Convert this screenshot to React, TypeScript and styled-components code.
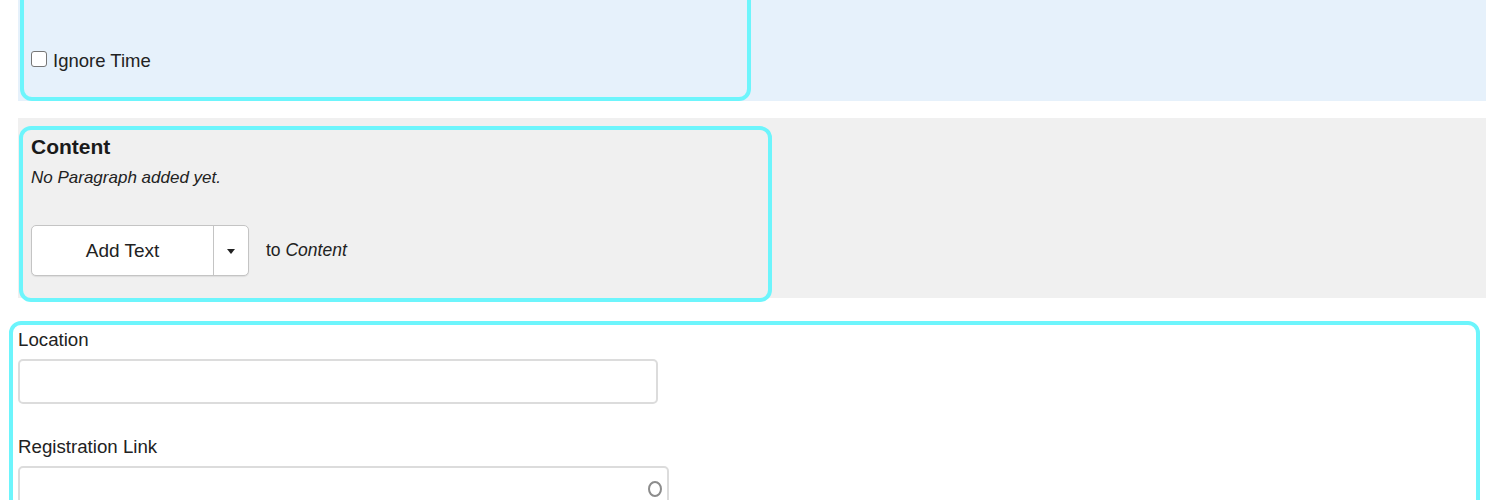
import styled, { createGlobalStyle } from "styled-components";

const GlobalStyle = createGlobalStyle`
  html, body {
    margin: 0;
    padding: 0;
    background: #ffffff;
    overflow: hidden;
  }
  body {
    font-family: "Liberation Sans", Arial, sans-serif;
    color: #222222;
  }
`;

const Page = styled.div`
  display: flex;
  flex-direction: column;
  margin-top: -64px;
`;

const Panel = styled.div<{ $bg: string; $top?: number }>`
  margin-left: 18px;
  width: 1468px;
  background: ${(p) => p.$bg};
  margin-top: ${(p) => p.$top ?? 0}px;
  display: flex;
`;

const HighlightBox = styled.div<{ $width: number }>`
  box-sizing: border-box;
  width: ${(p) => p.$width}px;
  border: 4px solid #6df5fc;
  border-radius: 12px;
`;

const DateBox = styled(HighlightBox)`
  margin-left: 2px;
  padding: 110px 7px 25px;
`;

const CheckRow = styled.label`
  display: flex;
  align-items: center;
  gap: 6px;
  font-size: 18.5px;
  line-height: 22px;
`;

const CheckBox = styled.span`
  display: inline-block;
  width: 14px;
  height: 14px;
  border: 1px solid #767676;
  border-radius: 3px;
  background: #fff;
  margin-top: -4px;
`;

const GrayPanel = styled(Panel)`
  height: 180px;
  padding-top: 8px;
  box-sizing: border-box;
  align-items: flex-start;
`;

const ContentBox = styled(HighlightBox)`
  height: 176px;
  margin-left: 1px;
  padding: 5px 8px 0;
  flex-shrink: 0;
`;

const Heading = styled.div`
  font-size: 21px;
  line-height: 24px;
  font-weight: 700;
  color: #1a1a1a;
`;

const Note = styled.div`
  margin-top: 9px;
  font-size: 17px;
  line-height: 20px;
  font-style: italic;
`;

const AddRow = styled.div`
  margin-top: 37px;
  display: flex;
  align-items: center;
  gap: 17px;
`;

const SplitButton = styled.div`
  display: flex;
  height: 51px;
  box-sizing: border-box;
  border: 1px solid #c4c4c4;
  border-radius: 5px;
  background: #ffffff;
  box-shadow: 0 1px 1px rgba(0, 0, 0, 0.08);
`;

const MainButton = styled.div`
  width: 181px;
  display: flex;
  align-items: center;
  justify-content: center;
  font-size: 19px;
  color: #222;
  border-right: 1px solid #c4c4c4;
`;

const CaretButton = styled.div`
  width: 34px;
  display: flex;
  align-items: center;
  justify-content: center;
`;

const Caret = styled.span`
  width: 0;
  height: 0;
  border-left: 4.5px solid transparent;
  border-right: 4.5px solid transparent;
  border-top: 5px solid #222;
  margin-top: 1px;
`;

const Target = styled.span`
  font-size: 17.5px;
  em {
    font-style: italic;
  }
`;

const FieldsBox = styled(HighlightBox)`
  margin-top: 23px;
  margin-left: 9px;
  padding: 4px 5px 0;
  height: 220px;
  background: #ffffff;
`;

const Label = styled.div<{ $top?: number }>`
  font-size: 18.7px;
  line-height: 21px;
  margin-top: ${(p) => p.$top ?? 0}px;
`;

const InputWrap = styled.div<{ $width: number }>`
  position: relative;
  box-sizing: border-box;
  width: ${(p) => p.$width}px;
  height: 45px;
  margin-top: 9px;
  border: 2px solid #dcdcdc;
  border-radius: 5px;
  background: #fff;
`;

const FieldIcon = styled.span`
  position: absolute;
  right: 5px;
  top: 13px;
  width: 10px;
  height: 12px;
  border: 2px solid #8c8c8c;
  border-radius: 50%;
`;

export default function App() {
  return (
    <>
      <GlobalStyle />
      <Page>
        <Panel $bg="#e6f1fb">
          <DateBox $width={731}>
            <CheckRow>
              <CheckBox />
              Ignore Time
            </CheckRow>
          </DateBox>
        </Panel>

        <GrayPanel $bg="#f0f0f0" $top={17}>
          <ContentBox $width={753}>
            <Heading>Content</Heading>
            <Note>No Paragraph added yet.</Note>
            <AddRow>
              <SplitButton>
                <MainButton>Add Text</MainButton>
                <CaretButton>
                  <Caret />
                </CaretButton>
              </SplitButton>
              <Target>
                to <em>Content</em>
              </Target>
            </AddRow>
          </ContentBox>
        </GrayPanel>

        <FieldsBox $width={1471}>
          <Label>Location</Label>
          <InputWrap $width={640} />
          <Label $top={32}>Registration Link</Label>
          <InputWrap $width={651}>
            <FieldIcon />
          </InputWrap>
        </FieldsBox>
      </Page>
    </>
  );
}
